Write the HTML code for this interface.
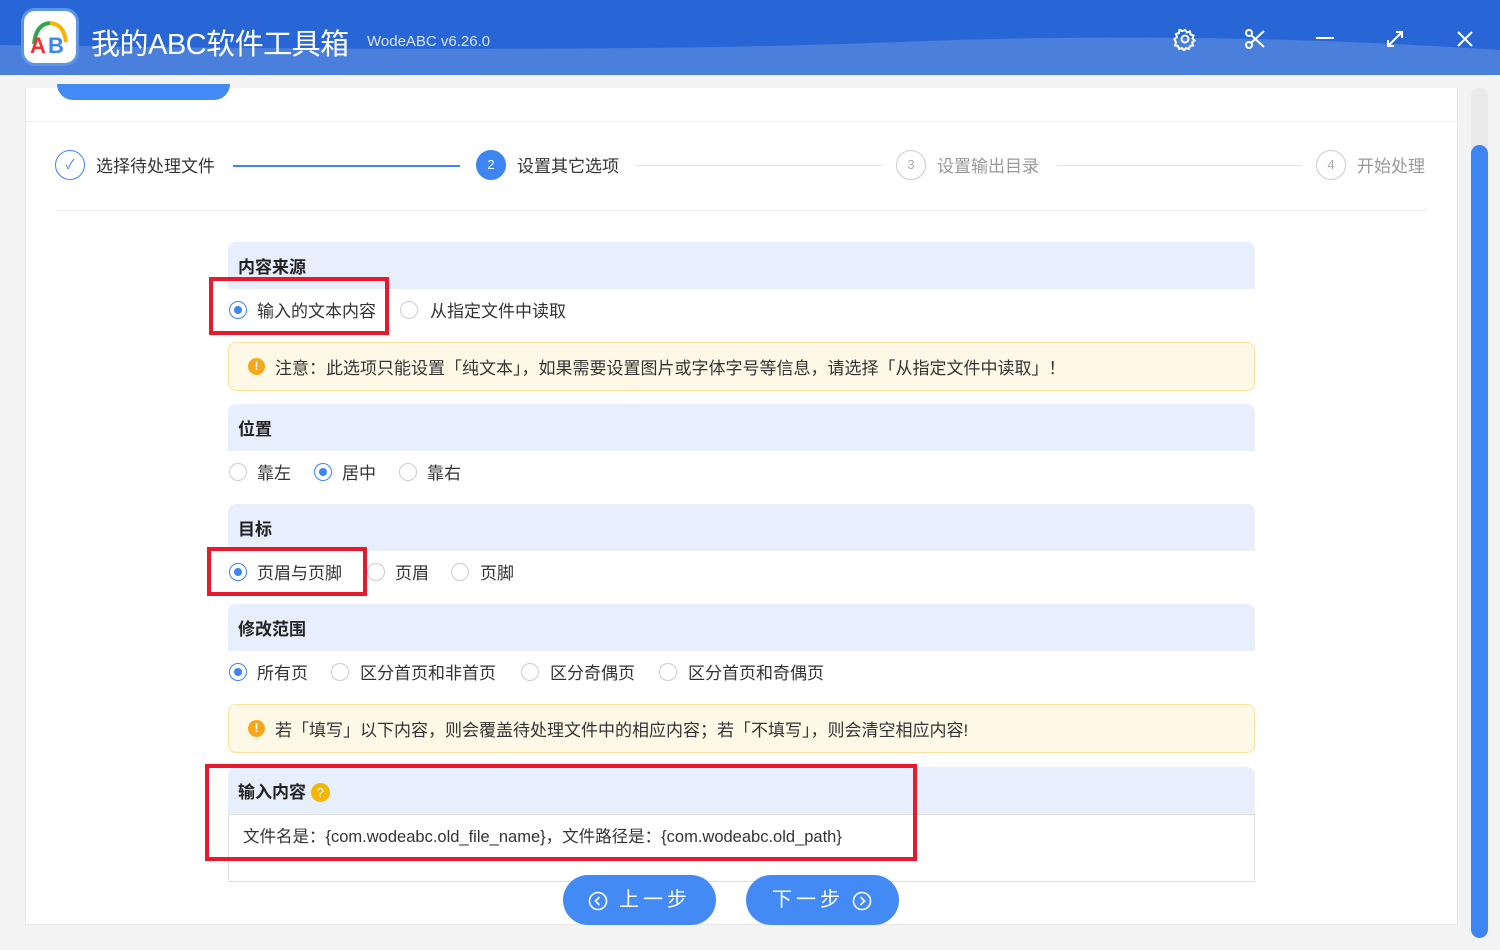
<!DOCTYPE html>
<html><head><meta charset="utf-8"><style>
*{margin:0;padding:0;box-sizing:border-box}
body{width:1500px;height:950px;overflow:hidden;background:#f3f3f3;font-family:"Liberation Sans","Noto Sans CJK SC",sans-serif;color:#333;position:relative}
.a{position:absolute}
.hdr{left:0;top:0;width:1500px;height:75px;background:#4a7fdb;overflow:hidden}
.sec{left:228px;width:1027px;height:47px;background:#e8effc;border-radius:8px 8px 0 0;font-size:17px;font-weight:bold;padding:11px 10px;color:#222}
.rad{width:18px;height:18px;border:1px solid #ccc;border-radius:50%;background:#fff}
.rad.on{border:1px solid #3d85f0}
.rad.on::after{content:"";position:absolute;left:4px;top:4px;width:8px;height:8px;border-radius:50%;background:#3d85f0}
.lab{font-size:17px;color:#333}
.note{left:228px;width:1027px;height:49px;background:#fef9e6;border:1px solid #fbe29a;border-radius:8px;font-size:17px;padding:11px 0 0 46px;color:#333}
.note::before{content:"!";position:absolute;left:19px;top:15px;width:17px;height:17px;border-radius:50%;background:#f6a81a;color:#fff;font-size:12px;font-weight:bold;text-align:center;line-height:17px}
.red{border:4px solid #e8192c}
.btn{height:50px;width:153px;border-radius:25px;background:#448af5;color:#fff;font-size:20px;line-height:50px;letter-spacing:4px}
.btn svg{position:absolute;top:16px}
.sc{width:30px;height:30px;border-radius:50%;border:1px solid #ccc;color:#aaa;font-size:13px;text-align:center;line-height:28px}
.st{font-size:17px;color:#999;top:152px}
</style></head><body>
<div class="a hdr">
<svg class="a" style="left:0;top:0" width="1500" height="75"><path d="M0 0H1500V50Q1200 30 900 42T0 45Z" fill="#2966d5"/></svg>
<div class="a" style="left:21px;top:8px;width:58px;height:58px;border-radius:14px;background:#fff;border:3px solid #5a95ea"></div>
<svg class="a" style="left:24px;top:12px" width="52" height="50"><path d="M10 32Q12 12 26 11" stroke="#2aa84a" stroke-width="4" fill="none"/><path d="M26 11Q40 12 42 30" stroke="#f5b400" stroke-width="4" fill="none"/><text x="6" y="41" font-size="22" font-family="Liberation Sans" fill="#e33" font-weight="bold">A</text><text x="24" y="41" font-size="22" font-family="Liberation Sans" fill="#3d85f0" font-weight="bold">B</text></svg>
<div class="a" style="left:91px;top:21px;font-size:29px;letter-spacing:-0.5px;color:#fff">我的ABC软件工具箱</div>
<div class="a" style="left:367px;top:33px;font-size:15px;color:#d8e4f8">WodeABC v6.26.0</div>
<svg class="a" style="left:1173px;top:27px" width="24" height="24" fill="none" stroke="#fff" stroke-width="2"><circle cx="12" cy="12" r="3.5"/><path d="M12 3l2 2.5 3-1 .5 3 3 1-1 3 2 2-2.5 2 1 3-3 .5-1 3-3-1-2 2.5-2-2.5-3 1-1-3-3-.5 1-3L1.5 12 4 10l-1-3 3-1 .5-3 3 1z"/></svg>
<svg class="a" style="left:1244px;top:28px" width="22" height="22" fill="none" stroke="#fff" stroke-width="2"><circle cx="5" cy="5" r="3"/><circle cx="5" cy="17" r="3"/><path d="M7 7l13 12M7 15L20 3"/></svg>
<div class="a" style="left:1316px;top:37px;width:18px;height:2px;background:#fff"></div>
<svg class="a" style="left:1386px;top:30px" width="18" height="18" fill="none" stroke="#fff" stroke-width="2"><path d="M2 16L16 2M10 2h6v6M2 10v6h6"/></svg>
<svg class="a" style="left:1457px;top:31px" width="16" height="16" stroke="#fff" stroke-width="2"><path d="M1 1L15 15M15 1L1 15"/></svg>
</div>
<div class="a" style="left:25px;top:88px;width:1433px;height:837px;background:#fff;border:1px solid #e6e6e6;border-top:none"></div>
<div class="a" style="left:57px;top:84px;width:173px;height:16px;background:#448af5;border-radius:0 0 20px 20px"></div>
<div class="a" style="left:26px;top:121px;width:1431px;height:1px;background:#eee"></div>
<div class="a" style="left:1471px;top:88px;width:17px;height:850px;background:#e9e9e9;border-radius:9px"></div>
<div class="a" style="left:1471px;top:145px;width:17px;height:793px;background:#3d85f0;border-radius:9px"></div>
<div class="a sc" style="left:55px;top:150px;border-color:#3d85f0;color:#3d85f0">✓</div>
<div class="a st" style="left:96px;color:#333">选择待处理文件</div>
<div class="a" style="left:233px;top:165px;width:227px;height:2px;background:#3d85f0"></div>
<div class="a sc" style="left:476px;top:150px;background:#3d85f0;border-color:#3d85f0;color:#fff">2</div>
<div class="a st" style="left:517px;color:#333">设置其它选项</div>
<div class="a" style="left:636px;top:165px;width:246px;height:1px;background:#e3e3e3"></div>
<div class="a sc" style="left:896px;top:150px">3</div>
<div class="a st" style="left:937px">设置输出目录</div>
<div class="a" style="left:1057px;top:165px;width:245px;height:1px;background:#e3e3e3"></div>
<div class="a sc" style="left:1316px;top:150px">4</div>
<div class="a st" style="left:1357px">开始处理</div>
<div class="a" style="left:55px;top:210px;width:1372px;height:1px;background:#eee"></div>
<div class="a sec" style="top:242px">内容来源</div>
<div class="a rad on" style="left:229px;top:301px"></div><div class="a lab" style="left:257px;top:297px">输入的文本内容</div>
<div class="a rad" style="left:400px;top:301px"></div><div class="a lab" style="left:430px;top:297px">从指定文件中读取</div>
<div class="a note" style="top:342px">注意：此选项只能设置「纯文本」，如果需要设置图片或字体字号等信息，请选择「从指定文件中读取」！</div>
<div class="a sec" style="top:404px">位置</div>
<div class="a rad" style="left:229px;top:463px"></div><div class="a lab" style="left:257px;top:459px">靠左</div>
<div class="a rad on" style="left:314px;top:463px"></div><div class="a lab" style="left:342px;top:459px">居中</div>
<div class="a rad" style="left:399px;top:463px"></div><div class="a lab" style="left:427px;top:459px">靠右</div>
<div class="a sec" style="top:504px">目标</div>
<div class="a rad on" style="left:229px;top:563px"></div><div class="a lab" style="left:257px;top:559px">页眉与页脚</div>
<div class="a rad" style="left:367px;top:563px"></div><div class="a lab" style="left:395px;top:559px">页眉</div>
<div class="a rad" style="left:451px;top:563px"></div><div class="a lab" style="left:480px;top:559px">页脚</div>
<div class="a sec" style="top:604px">修改范围</div>
<div class="a rad on" style="left:229px;top:663px"></div><div class="a lab" style="left:257px;top:659px">所有页</div>
<div class="a rad" style="left:331px;top:663px"></div><div class="a lab" style="left:360px;top:659px">区分首页和非首页</div>
<div class="a rad" style="left:521px;top:663px"></div><div class="a lab" style="left:550px;top:659px">区分奇偶页</div>
<div class="a rad" style="left:659px;top:663px"></div><div class="a lab" style="left:688px;top:659px">区分首页和奇偶页</div>
<div class="a note" style="top:704px">若「填写」以下内容，则会覆盖待处理文件中的相应内容；若「不填写」，则会清空相应内容!</div>
<div class="a sec" style="top:767px">输入内容 <span style="display:inline-block;width:19px;height:19px;border-radius:50%;background:#f5b400;color:#fff;font-size:13px;text-align:center;line-height:19px;font-weight:normal;vertical-align:1px">?</span></div>
<div class="a" style="left:228px;top:814px;width:1027px;height:68px;border:1px solid #ddd;font-size:16.5px;padding:8px 14px;color:#333">文件名是：{com.wodeabc.old_file_name}，文件路径是：{com.wodeabc.old_path}</div>
<div class="a red" style="left:209px;top:277px;width:180px;height:58px"></div>
<div class="a red" style="left:207px;top:547px;width:160px;height:49px"></div>
<div class="a red" style="left:205px;top:764px;width:712px;height:97px"></div>
<div class="a btn" style="left:563px;top:875px"><svg style="left:25px" width="20" height="20" fill="none" stroke="#fff" stroke-width="1.6"><circle cx="10" cy="10" r="8.5"/><path d="M11.5 6L7.5 10l4 4"/></svg><span class="a" style="left:56px">上一步</span></div>
<div class="a btn" style="left:746px;top:875px"><span class="a" style="left:26px">下一步</span><svg style="left:106px" width="20" height="20" fill="none" stroke="#fff" stroke-width="1.6"><circle cx="10" cy="10" r="8.5"/><path d="M8.5 6l4 4-4 4"/></svg></div>
</body></html>
